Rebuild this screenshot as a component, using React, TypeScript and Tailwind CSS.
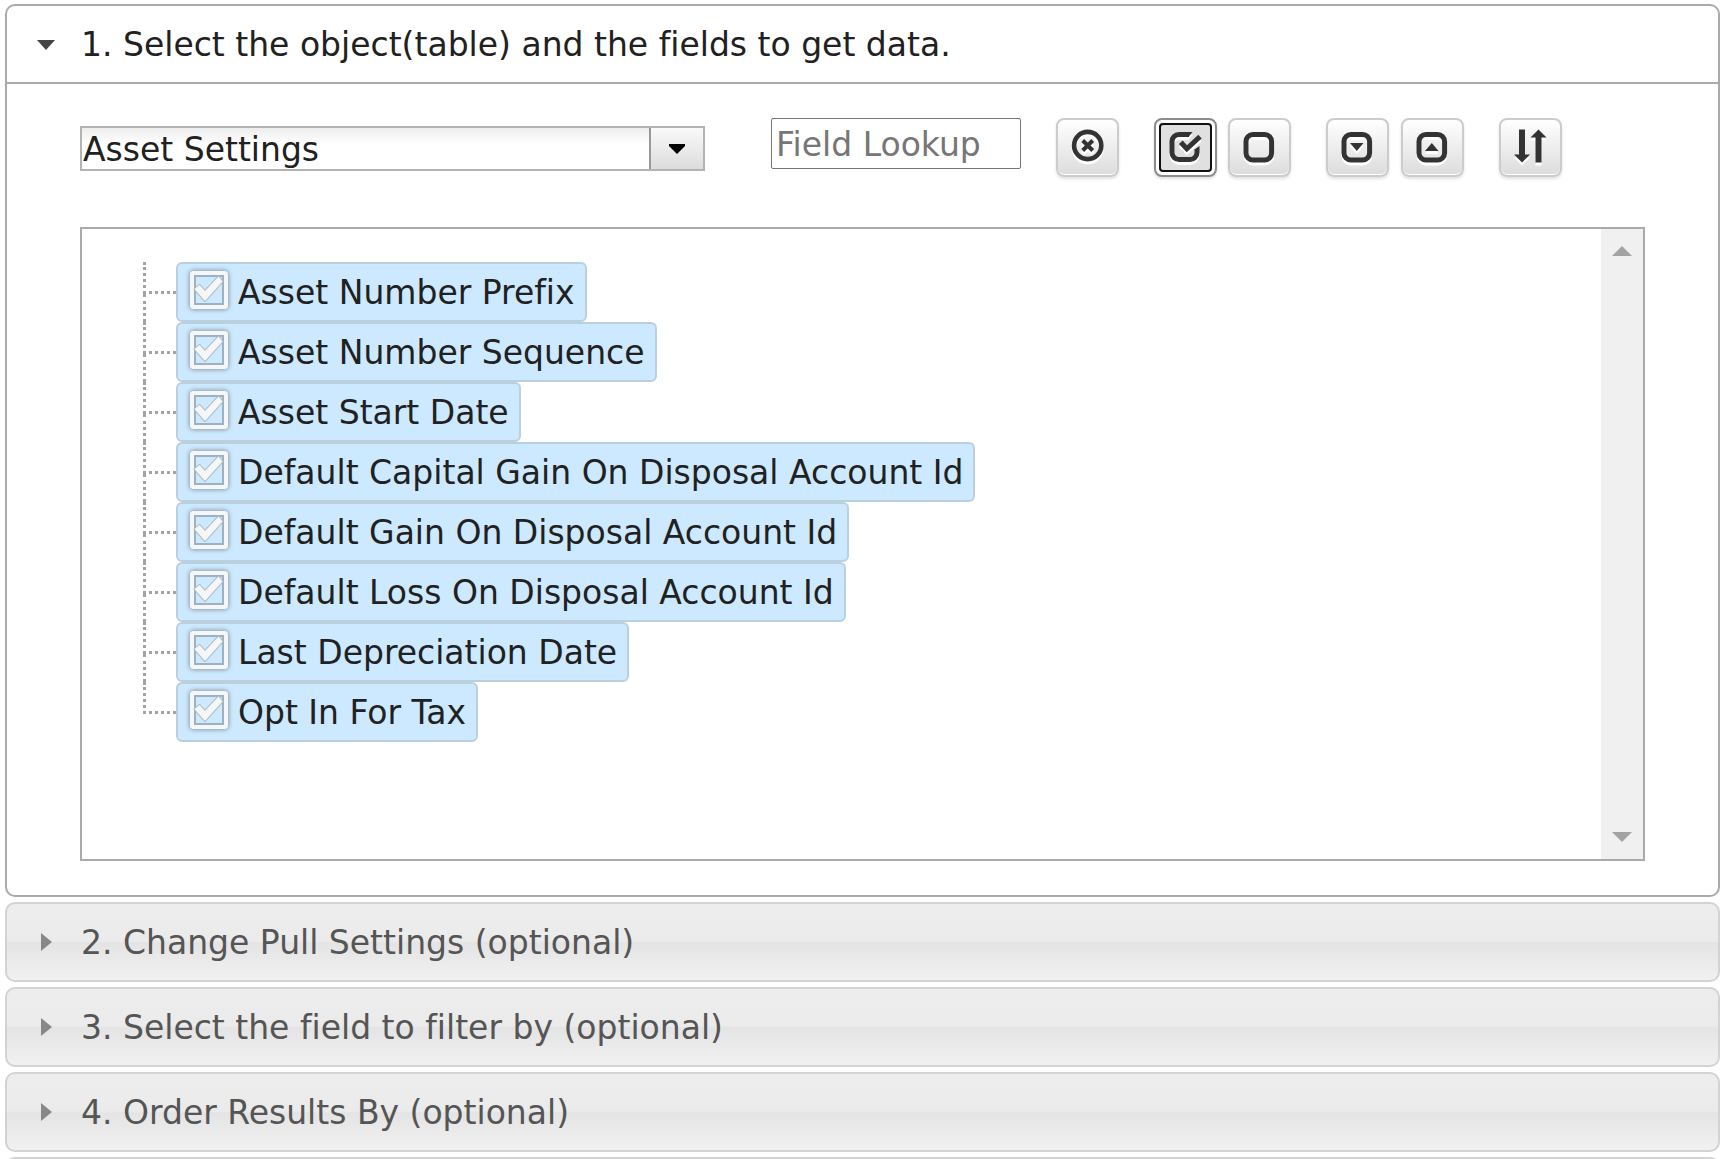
import React from "react";
import cn from "clsx";

const fields = [
  "Asset Number Prefix",
  "Asset Number Sequence",
  "Asset Start Date",
  "Default Capital Gain On Disposal Account Id",
  "Default Gain On Disposal Account Id",
  "Default Loss On Disposal Account Id",
  "Last Depreciation Date",
  "Opt In For Tax",
];

const collapsedSteps = [
  "2. Change Pull Settings (optional)",
  "3. Select the field to filter by (optional)",
  "4. Order Results By (optional)",
];

interface ToolButtonProps {
  label: string;
  className?: string;
  active?: boolean;
  children: React.ReactNode;
}

const ToolButton: React.FC<ToolButtonProps> = ({
  label,
  className,
  active,
  children,
}) => (
  <button
    type="button"
    aria-label={label}
    className={cn(
      "flex h-[59px] w-[63px] shrink-0 items-center justify-center rounded-lg border-2",
      active
        ? "border-[#8c8c8c] bg-white p-[3px] shadow-[0_2px_3px_rgba(0,0,0,0.12)]"
        : "border-[#cccccc] bg-linear-to-b from-white to-[#dcdcdc] shadow-[0_2px_3px_rgba(0,0,0,0.12),inset_0_-1px_0_#fff]",
      className
    )}
  >
    {active ? (
      <span className="flex h-full w-full items-center justify-center rounded-sm border-2 border-[#101010] bg-[#e0e0e0]">
        {children}
      </span>
    ) : (
      children
    )}
  </button>
);

const iconClassName =
  "h-9 w-9 shrink-0 overflow-visible drop-shadow-[0_3px_0_#fff]";

const ClearIcon: React.FC = () => (
  <svg className={iconClassName} viewBox="0 0 36 36" fill="none" stroke="#333">
    <circle cx="17.7" cy="15.5" r="13.6" strokeWidth="4.6" />
    <path d="M12.7 10.5l10 10M22.7 10.5l-10 10" strokeWidth="4" />
  </svg>
);

const CheckIcon: React.FC = () => (
  <svg className={iconClassName} viewBox="0 0 36 36" fill="none" stroke="#333">
    <path
      d="M21 4.500H11a7 7 0 0 0-7 7v11a7 7 0 0 0 7 7h11a7 7 0 0 0 7-7v-3"
      strokeWidth="5"
    />
    <path d="M21 2h3.500l-4 5H19zM31.500 16v4h-5v-0.500z" fill="#333" stroke="none" />
    <path d="M12.800 12.300l6 6.500L32 6.700" strokeWidth="5" />
  </svg>
);

const BoxIcon: React.FC<{ inner?: string }> = ({ inner }) => (
  <svg className={iconClassName} viewBox="0 0 36 36" fill="none" stroke="#333">
    <rect x="4" y="4.500" width="25.600" height="25.600" rx="7" strokeWidth="5" />
    {inner && <path d={inner} fill="#333" stroke="none" />}
  </svg>
);

const SortIcon: React.FC = () => (
  <svg className={iconClassName} viewBox="0 0 36 36" fill="#333">
    <path d="M6 -0.500h6v25h5l-8 8-8-8h5zM22.500 32.500h6v-25h5l-8-8-8 8h5z" />
  </svg>
);

const FieldNode: React.FC<{ name: string; last: boolean }> = ({
  name,
  last,
}) => (
  <li className="flex h-[60px]">
    <div className="flex w-[33px] flex-col">
      <div className="h-8 border-b-[3px] border-l-[3px] border-dotted border-[#a3a3a3]" />
      {!last && (
        <div className="flex-1 border-l-[3px] border-dotted border-[#a3a3a3]" />
      )}
    </div>
    <label className="flex items-center rounded-md border-2 border-[#bbd0de] bg-[#cce9ff] pr-[10px] pl-[10px]">
      <span className="mr-2 mb-1 grid h-11 w-[42px] place-items-center">
        <input
          type="checkbox"
          defaultChecked
          className="col-start-1 row-start-1 h-[38px] w-[38px] appearance-none rounded-sm border-4 border-[#f4f6f7] shadow-[0_0_4px_1px_#8d9ba6,inset_0_0_0_2px_#9cb2c0]"
        />
        <svg
          className="pointer-events-none col-start-1 row-start-1 h-8 w-8"
          viewBox="0 0 32 32"
        >
          <path
            d="M1.500 15l5-4 5.500 6L25.500 2.500l4 5L12 27z"
            fill="#f6f6f6"
            stroke="#a9bdca"
            strokeWidth="2"
            strokeLinejoin="round"
            paintOrder="stroke"
          />
        </svg>
      </span>
      <span className="pt-[2px]">{name}</span>
    </label>
  </li>
);

const StepHeader: React.FC<{ title?: string }> = ({ title }) => (
  <button
    type="button"
    className="flex h-20 w-full shrink-0 items-center rounded-[10px] border-2 border-[#d3d3d3] bg-[linear-gradient(#ededed_0%,#ebebeb_49%,#e4e4e4_51%,#f1f1f1_100%)] pl-[34px] text-left text-[#555]"
  >
    <svg className="mr-7 h-5 w-3" viewBox="0 0 12 20" fill="#888">
      <path d="M0 1l11 9-11 9z" />
    </svg>
    <span className="pt-[2px]">{title}</span>
  </button>
);

const App: React.FC = () => (
  <main className="flex h-screen flex-col gap-[5px] overflow-hidden bg-white pt-1 pr-[10px] pl-[5px] font-['DejaVu_Sans',sans-serif] text-[33px] leading-10 text-[#212121] [font-variant-ligatures:none]">
    <section className="shrink-0 rounded-[10px] border-2 border-[#aaa]">
      <h2 className="border-b-2 border-[#aaa]">
        <button
          type="button"
          className="flex h-[76px] w-full items-center pt-[2px] pl-[30px] text-left"
        >
          <svg className="mr-[26px] h-3 w-[18px]" viewBox="0 0 18 12" fill="#444">
            <path d="M0 1h18L9 11z" />
          </svg>
          1. Select the object(table) and the fields to get data.
        </button>
      </h2>
      <div className="px-[73px] pt-[34px] pb-[34px]">
        <div className="flex h-[109px] items-start">
          <div className="mt-2 grid w-[625px] shrink-0">
            <select
              aria-label="Object"
              className="col-start-1 row-start-1 h-[45px] appearance-none border-2 border-[#b3b3b3] bg-linear-to-b from-[#ededed] to-white to-40% pt-[2px] pl-[1px] leading-10"
            >
              <option>Asset Settings</option>
            </select>
            <span className="pointer-events-none col-start-1 row-start-1 my-[2px] mr-[2px] flex w-[54px] items-center justify-center justify-self-end border-l-2 border-[#999] bg-linear-to-b from-[#fafafa] to-[#dcdcdc]">
              <svg className="h-3 w-4" viewBox="0 0 16 12">
                <path d="M0 1h16v2L8 11 0 3z" />
              </svg>
            </span>
          </div>
          <input
            type="text"
            aria-label="Field Lookup"
            placeholder="Field Lookup"
            className="ml-[66px] h-[51px] w-[250px] shrink-0 rounded-xs border border-[#767676] px-1 pt-[2px] placeholder:text-[#767676]"
          />
          <ToolButton label="Clear lookup" className="ml-[35px]">
            <ClearIcon />
          </ToolButton>
          <ToolButton label="Select all" className="ml-[35px]" active>
            <CheckIcon />
          </ToolButton>
          <ToolButton label="Deselect all" className="ml-[11px]">
            <BoxIcon />
          </ToolButton>
          <ToolButton label="Expand all" className="ml-[35px]">
            <BoxIcon inner="M10 13h13.500l-6.700 8z" />
          </ToolButton>
          <ToolButton label="Collapse all" className="ml-[12px]">
            <BoxIcon inner="M10 21h13.500l-6.700-8z" />
          </ToolButton>
          <ToolButton label="Sort" className="ml-[35px]">
            <SortIcon />
          </ToolButton>
        </div>
        <div className="flex h-[634px] justify-between border-2 border-[#aaa]">
          <ul className="pt-[33px] pl-[61px]">
            {fields.map((field, index) => (
              <FieldNode
                key={field}
                name={field}
                last={index === fields.length - 1}
              />
            ))}
          </ul>
          <div className="flex w-[42px] flex-col items-center justify-between bg-[#f0f0f0] py-[17px]">
            <svg className="h-[10px] w-5" viewBox="0 0 20 10" fill="#a3a3a3">
              <path d="M0 10h20L10 0z" />
            </svg>
            <svg className="h-[10px] w-5" viewBox="0 0 20 10" fill="#a3a3a3">
              <path d="M0 0h20L10 10z" />
            </svg>
          </div>
        </div>
      </div>
    </section>
    {collapsedSteps.map((title) => (
      <StepHeader key={title} title={title} />
    ))}
    <StepHeader />
  </main>
);

export default App;
